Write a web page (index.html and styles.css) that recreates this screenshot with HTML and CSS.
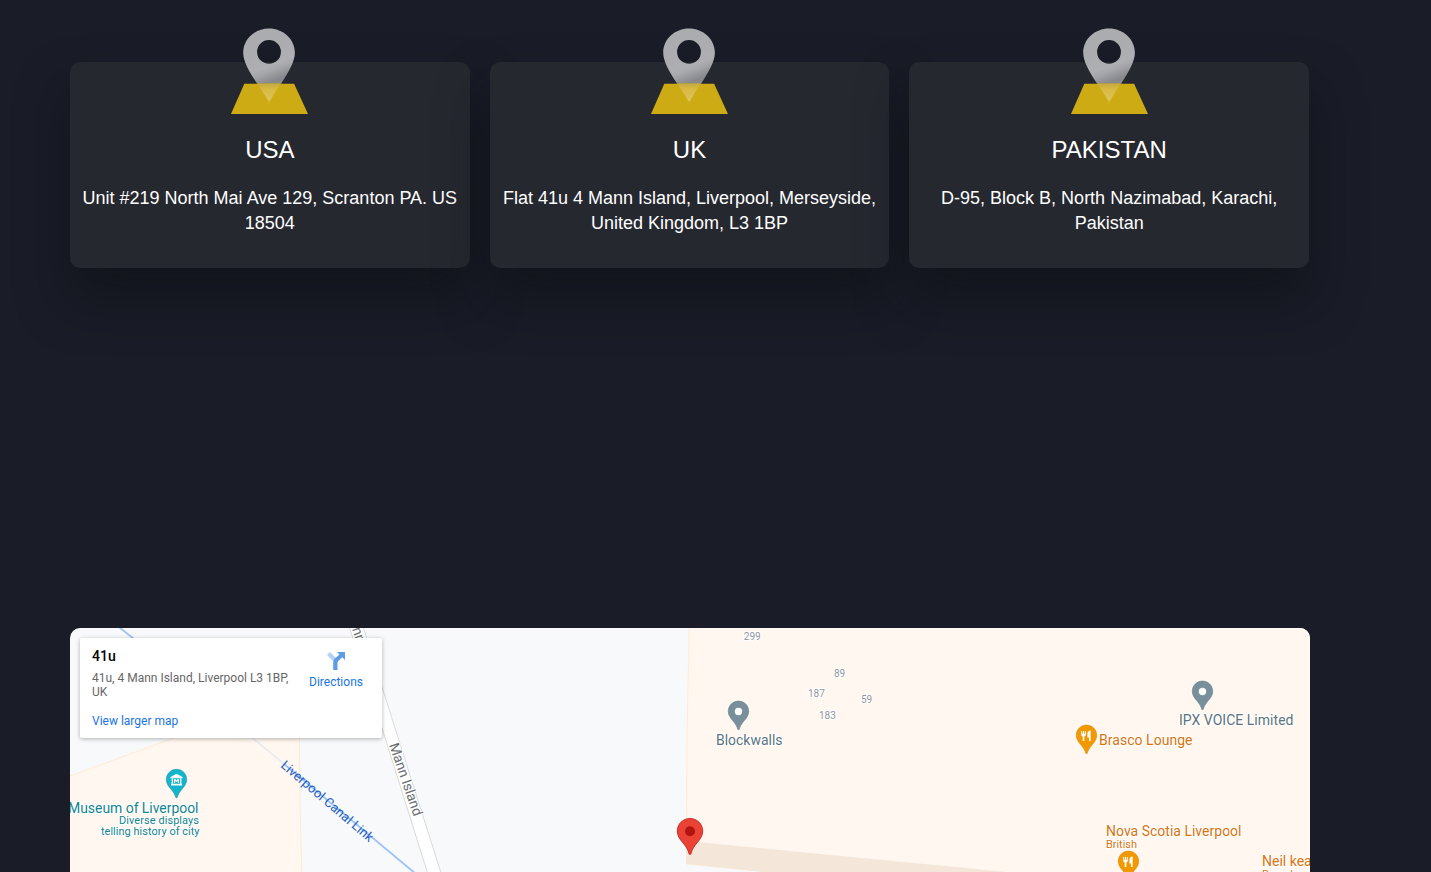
FILE: index.html
```html
<!DOCTYPE html>
<html lang="en">
<head>
<meta charset="utf-8">
<title>Our Offices</title>
<link rel="stylesheet" href="styles.css">
</head>
<body>
<svg class="defs" width="0" height="0" aria-hidden="true">
  <defs>
    <linearGradient id="pinShade" gradientUnits="userSpaceOnUse" x1="30" y1="20" x2="44" y2="57">
      <stop offset="0" stop-color="#abacaf"/>
      <stop offset="0.5" stop-color="#aeafb2"/>
      <stop offset="0.62" stop-color="#a6a7aa"/>
      <stop offset="0.9" stop-color="#86878c"/>
      <stop offset="1" stop-color="#8c8c8c"/>
    </linearGradient>
    <linearGradient id="tipShade" x1="0" y1="0" x2="0" y2="1">
      <stop offset="0" stop-color="#c2a93f"/>
      <stop offset="0.3" stop-color="#d8b940"/>
      <stop offset="1" stop-color="#dfc363"/>
    </linearGradient>
    <symbol id="office-pin" viewBox="0 0 77 86">
      <path fill="#cdab15" d="M13.3 55.7h49.8L77 86H0z"/>
      <path fill="url(#pinShade)" fill-rule="evenodd" d="M38 .4C23.8.4 12.200 11.200 12.200 24.400C12.200 34 19 44.500 26.200 55.700H50C57.100 44.500 63.900 34 63.900 24.400C63.900 11.200 52.200.4 38 .4zM38 12a11.900 11.900 0 1 1 0 23.800a11.900 11.900 0 0 1 0-23.800z"/>
      <path fill="url(#tipShade)" d="M26.200 55.200H50L38.100 74z"/>
    </symbol>
  </defs>
</svg>
<main class="page">
  <section class="offices">
    <article class="office">
      <svg class="office-icon"><use href="#office-pin"/></svg>
      <h2 class="office-name">USA</h2>
      <p class="office-address">Unit #219 North Mai Ave 129, Scranton PA. US 18504</p>
    </article>
    <article class="office">
      <svg class="office-icon"><use href="#office-pin"/></svg>
      <h2 class="office-name">UK</h2>
      <p class="office-address">Flat 41u 4 Mann Island, Liverpool, Merseyside, United Kingdom, L3 1BP</p>
    </article>
    <article class="office">
      <svg class="office-icon"><use href="#office-pin"/></svg>
      <h2 class="office-name">PAKISTAN</h2>
      <p class="office-address">D-95, Block B, North Nazimabad, Karachi, Pakistan</p>
    </article>
  </section>
  <section class="map">
    <svg class="map-canvas" viewBox="70 628 1240 244" width="1240" height="244">
      <defs>
        <path id="drop" d="M0-10.200c-5.700 0-10.200 4.500-10.200 10.200c0 3.800 2 6.500 4.400 9.300C-3.300 12.200-1.500 15-.6 18.300h1.200C1.500 15 3.300 12.200 5.800 9.300C8.200 6.500 10.200 3.800 10.200 0c0-5.700-4.500-10.200-10.200-10.200z"/>
        <g id="cutlery" fill="#fff">
          <path d="M-5.300-5h1v2.800h.8V-5h1.100v2.800h.8V-5h1v3.500c0 1.200-.8 1.700-1.600 2V5h-1.600V.5c-.9-.3-1.500-.9-1.500-2z"/>
          <path d="M4.100-5.600V5H2.500V1.400H.9v-3.600C.9-4.300 2.400-5.500 4.100-5.600z"/>
        </g>
      </defs>
      <rect x="70" y="628" width="1240" height="244" fill="#f8f9fb"/>
      <path class="block" d="M60 780L70 776L182 735H299.500L300 805L302 880H60z"/>
      <path class="block" d="M689.500 620L688.500 662L687 740L686.500 864L790 874H1320V620z"/>
      <path fill="#f4e7da" d="M686.300 842H697L1012 872.500H770L686.300 864z"/>
      <path class="canal" d="M119 627L134 639"/>
      <path class="canal faint" d="M252 737.500L284 764"/>
      <path class="canal" d="M284 764L416 874"/>
      <path class="road" d="M347 620L382 728L428.500 876H442L382 687L361 620z"/>
      <text class="label street" transform="translate(389 745) rotate(71)" textLength="76">Mann Island</text>
      <text class="label street" transform="translate(352 629) rotate(71)">nn Island</text>
      <text class="label water" transform="translate(280 766.500) rotate(40.500)" textLength="117">Liverpool Canal Link</text>

      <use href="#drop" x="176.500" y="779.500" fill="#12b5cb" stroke="#2292a2" stroke-width=".6"/>
      <g fill="#fff" transform="translate(.2 .8)"><path d="M176.300 773l-6 3.200v1.300h12v-1.300z"/><path d="M171.500 777.500h1.300v6h-1.300zM179.900 777.500h1.300v6h-1.300zM170.800 783h11v1.600h-11z"/><path d="M173.800 782.300v-4.200h1.200l1.300 1.600l1.300-1.600h1.200v4.200h-1.100v-2.300l-1.400 1.500l-1.400-1.500v2.300z"/></g>
      <text class="label teal" x="68" y="813" textLength="130.500">Museum of Liverpool</text>
      <text class="label teal small" x="119" y="824" textLength="80">Diverse displays</text>
      <text class="label teal small" x="101" y="835" textLength="98.500">telling history of city</text>

      <text class="label number" x="743.800" y="639.500">299</text>
      <text class="label number" x="834" y="676.500">89</text>
      <text class="label number" x="808" y="696.500">187</text>
      <text class="label number" x="861" y="702.500">59</text>
      <text class="label number" x="819" y="718.500">183</text>

      <use href="#drop" x="738.500" y="711.300" fill="#78909c" stroke="#607d8b" stroke-width=".6"/>
      <circle cx="738.500" cy="711.500" r="3.700" fill="#fff"/>
      <text class="label slate" x="716" y="745" textLength="66.500">Blockwalls</text>
      <use href="#drop" x="1202.500" y="691.300" fill="#78909c" stroke="#607d8b" stroke-width=".6"/>
      <circle cx="1202.500" cy="691.500" r="3.700" fill="#fff"/>
      <text class="label slate" x="1179" y="725" textLength="114.500">IPX VOICE Limited</text>

      <use href="#drop" x="1086.500" y="735.300" fill="#f29900" stroke="#d98516" stroke-width=".6"/>
      <use href="#cutlery" x="1086.500" y="736"/>
      <text class="label food" x="1099" y="745" textLength="93.500">Brasco Lounge</text>
      <text class="label food" x="1106" y="836" textLength="135.500">Nova Scotia Liverpool</text>
      <text class="label food small" x="1106" y="847.500" textLength="31">British</text>
      <use href="#drop" x="1128.500" y="861.300" fill="#f29900" stroke="#d98516" stroke-width=".6"/>
      <use href="#cutlery" x="1128.500" y="862"/>
      <text class="label food" x="1262" y="866">Neil keating</text>
      <text class="label food small" x="1262" y="878">Branch</text>

      <path fill="#ea4335" stroke="#c5221f" stroke-width=".9" d="M690 818.500c-7.200 0-12.700 5.600-12.700 12.600c0 4.700 2.500 8 5.600 11.700c3 3.600 5.200 6.600 6.300 11.400h1.600c1.100-4.800 3.300-7.800 6.300-11.400c3.100-3.700 5.600-7 5.600-11.700c0-7-5.500-12.600-12.700-12.600z"/>
      <circle cx="690" cy="831.300" r="5" fill="#b31412"/>
    </svg>
    <div class="place">
      <div class="place-info">
        <div class="place-name">41u</div>
        <div class="place-address">41u, 4 Mann Island, Liverpool L3 1BP, UK</div>
        <a class="place-link">View larger map</a>
      </div>
      <div class="directions">
        <svg width="18" height="18" viewBox="0 0 18 18">
          <path fill="#b3d1f5" d="M0 3L3 0L9.500 6.500L7 10z"/>
          <path fill="#5c9be6" d="M10 0h8v8l-2.800-2.800l-3.600 3.600c-.8.8-1.100 1.500-1.100 2.600V18H6.200v-7c0-2 .6-3.500 2-4.800l4.200-3.800z"/>
        </svg>
        <span>Directions</span>
      </div>
    </div>
  </section>
</main>
</body>
</html>
```

FILE: styles.css
```css
* { box-sizing: border-box; }

body {
  margin: 0;
  height: 872px;
  overflow: hidden;
  background: #1a1c27;
  font-family: "Liberation Sans", Arial, sans-serif;
  color: #fff;
}

.defs { display: block; }

.page {
  width: 1310px;
  padding: 62px 0 0 70px;
}

.offices {
  display: grid;
  grid-template-columns: repeat(3, 1fr);
  gap: 20px;
  width: 1239px;
}

.office {
  height: 206px;
  padding: 0 10px;
  border-radius: 10px;
  background: #262830;
  box-shadow: 0 30px 50px rgba(14, 17, 21, 0.6);
  text-align: center;
}

.office-icon {
  display: block;
  width: 77px;
  height: 86px;
  margin: -34px auto 0;
}

.office-name {
  margin: 21px 0 0;
  font-size: 24px;
  line-height: 29px;
  font-weight: 400;
}

.office-address {
  margin: 22px 0 0;
  font-size: 18px;
  line-height: 25px;
}

.map {
  position: relative;
  width: 1240px;
  height: 244px;
  margin-top: 360px;
  border-radius: 10px 10px 0 0;
  overflow: hidden;
  font-family: Roboto, sans-serif;
}

.map-canvas { display: block; }

.block { fill: #fff7f0; stroke: #ffebd2; stroke-width: 1; }
.canal { fill: none; stroke: #9ec2f8; stroke-width: 1.8; }
.faint { stroke: #e9ecef; }
.road { fill: #fff; stroke: #d9dadc; stroke-width: 1; }

.label {
  font-size: 14px;
  stroke: #fff;
  stroke-width: 2px;
  stroke-linejoin: round;
  paint-order: stroke;
}
.small { font-size: 11px; }
.number { font-size: 10px; fill: #8f979f; }
.street { fill: #6a6e73; }
.water { font-size: 13px; fill: #1f5fc4; stroke: none; }
.teal { fill: #11848f; }
.slate { fill: #5b7480; }
.food { fill: #d9730f; }

.place {
  position: absolute;
  top: 10px;
  left: 10px;
  display: flex;
  width: 302px;
  height: 100px;
  padding: 9px 12px;
  border-radius: 2px;
  background: #fff;
  box-shadow: 0 1px 4px rgba(0, 0, 0, 0.3);
}

.place-info {
  flex: none;
  width: 200px;
}

.place-name {
  font-size: 14px;
  line-height: 19px;
  font-weight: 500;
  color: #000;
}

.place-address {
  margin-top: 5px;
  font-size: 12px;
  line-height: 14px;
  color: #666;
}

.place-link {
  display: block;
  margin-top: 15px;
  font-size: 12px;
  line-height: 14px;
  color: #1a73e8;
}

.directions {
  display: flex;
  flex: none;
  flex-direction: column;
  align-items: center;
  width: 88px;
  padding: 5px 0 0;
  gap: 5px;
  font-size: 12px;
  line-height: 14px;
  color: #1a73e8;
}
```
